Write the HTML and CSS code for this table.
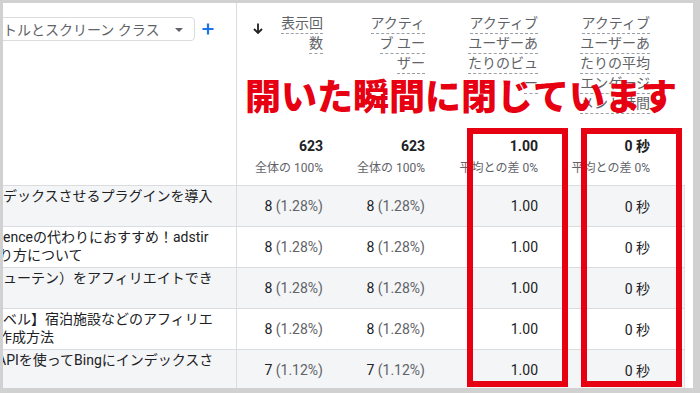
FILE: index.html
```html
<!DOCTYPE html>
<html lang="ja">
<head>
<meta charset="utf-8">
<title>GA table</title>
<link rel="stylesheet" href="styles.css">
</head>
<body>
<div class="frame">
  <div class="table">
    <div class="hcell first">
      <div class="picker">
        <div class="select"><span class="select-text">トルとスクリーン クラス</span><span class="caret"></span></div>
        <svg class="plus" width="12" height="12" viewBox="0 0 12 12"><path d="M6 0.5V11.5M0.5 6H11.5" stroke="#1a73e8" stroke-width="2.2" fill="none"/></svg>
      </div>
    </div>
    <div class="hcell num">
      <div class="label sorted">
        <svg class="arrow" width="10" height="11" viewBox="0 0 10 11"><path d="M5 0.5V10M1 6L5 10L9 6" stroke="#202124" stroke-width="1.8" fill="none"/></svg>
        <div class="lines"><span>表示回</span><span>数</span></div>
      </div>
      <div class="total"><div class="tv">623</div><div class="ts">全体の 100%</div></div>
    </div>
    <div class="hcell num">
      <div class="label"><div class="lines"><span>アクティ</span><span>ブ ユー</span><span>ザー</span></div></div>
      <div class="total"><div class="tv">623</div><div class="ts">全体の 100%</div></div>
    </div>
    <div class="hcell num">
      <div class="label"><div class="lines"><span>アクティブ</span><span>ユーザーあ</span><span>たりのビュ</span><span>ー</span></div></div>
      <div class="total"><div class="tv">1.00</div><div class="ts">平均との差 0%</div></div>
    </div>
    <div class="hcell num">
      <div class="label"><div class="lines"><span>アクティブ</span><span>ユーザーあ</span><span>たりの平均</span><span>エンゲージ</span><span>メント時間</span></div></div>
      <div class="total"><div class="tv">0 秒</div><div class="ts">平均との差 0%</div></div>
    </div>
    <div class="hcell tail"></div>

    <div class="row alt">
      <div class="cell title"><div class="tl">デックスさせるプラグインを導入</div></div>
      <div class="cell val">8<span class="pct">&nbsp;(1.28%)</span></div>
      <div class="cell val">8<span class="pct">&nbsp;(1.28%)</span></div>
      <div class="cell val">1.00</div>
      <div class="cell val">0 秒</div>
      <div class="cell tail"></div>
    </div>
    <div class="row">
      <div class="cell title"><div class="tl">enceの代わりにおすすめ！adstir</div><div class="tl cut4">り方について</div></div>
      <div class="cell val">8<span class="pct">&nbsp;(1.28%)</span></div>
      <div class="cell val">8<span class="pct">&nbsp;(1.28%)</span></div>
      <div class="cell val">1.00</div>
      <div class="cell val">0 秒</div>
      <div class="cell tail"></div>
    </div>
    <div class="row alt">
      <div class="cell title"><div class="tl">ューテン）をアフィリエイトでき</div></div>
      <div class="cell val">8<span class="pct">&nbsp;(1.28%)</span></div>
      <div class="cell val">8<span class="pct">&nbsp;(1.28%)</span></div>
      <div class="cell val">1.00</div>
      <div class="cell val">0 秒</div>
      <div class="cell tail"></div>
    </div>
    <div class="row">
      <div class="cell title"><div class="tl">ベル】宿泊施設などのアフィリエ</div><div class="tl cut5">作成方法</div></div>
      <div class="cell val">8<span class="pct">&nbsp;(1.28%)</span></div>
      <div class="cell val">8<span class="pct">&nbsp;(1.28%)</span></div>
      <div class="cell val">1.00</div>
      <div class="cell val">0 秒</div>
      <div class="cell tail"></div>
    </div>
    <div class="row alt">
      <div class="cell title"><div class="tl cut6">APIを使ってBingにインデックスさ</div></div>
      <div class="cell val">7<span class="pct">&nbsp;(1.12%)</span></div>
      <div class="cell val">7<span class="pct">&nbsp;(1.12%)</span></div>
      <div class="cell val">1.00</div>
      <div class="cell val">0 秒</div>
      <div class="cell tail"></div>
    </div>
  </div>

  <div class="headline">開いた瞬間に閉じています</div>
  <div class="mark mark-a"></div>
  <div class="mark mark-b"></div>
</div>
</body>
</html>
```

FILE: styles.css
```css
html, body {
  margin: 0;
  padding: 0;
}
body {
  background: #d1d1d1;
  font-family: Roboto, "Noto Sans CJK JP", sans-serif;
  color: #202124;
  width: 700px;
  height: 393px;
  overflow: hidden;
}
.frame {
  position: relative;
  margin: 3px 0 0 3px;
  width: 690px;
  height: 385px;
  background: #fff;
  overflow: hidden;
}
.table {
  display: grid;
  grid-template-columns: 234px 98px 102px 113px 112px 31px;
  grid-template-rows: 182px repeat(5, 41px);
}
.row {
  display: contents;
}
.row.alt > .cell {
  background: #f4f5f7;
}
.hcell {
  box-sizing: border-box;
  height: 182px;
}
.hcell.first {
  border-right: 1px solid #dadce0;
  padding-top: 14px;
}
.picker {
  display: flex;
  align-items: center;
  gap: 7px;
}
.select {
  box-sizing: border-box;
  margin-left: -20px;
  width: 212px;
  height: 24px;
  border: 1px solid #dadce0;
  border-radius: 4px;
  padding: 0 11px 0 19px;
  display: flex;
  align-items: center;
  justify-content: space-between;
  font-size: 14px;
  color: #5f6368;
  white-space: nowrap;
}
.caret {
  width: 0;
  height: 0;
  border-left: 4px solid transparent;
  border-right: 4px solid transparent;
  border-top: 4px solid #5f6368;
  margin-top: 1px;
}
.plus {
  display: block;
  margin-top: -1px;
}
.hcell.num {
  display: flex;
  flex-direction: column;
  justify-content: space-between;
  align-items: stretch;
  padding: 11px 12px 7px 0;
}
.label {
  display: flex;
  justify-content: flex-end;
}
.label.sorted {
  justify-content: space-between;
  padding-left: 16px;
}
.arrow {
  display: block;
  margin-top: 9px;
}
.lines {
  display: flex;
  flex-direction: column;
  align-items: flex-end;
}
.lines span {
  box-sizing: border-box;
  height: 20px;
  line-height: 19px;
  font-size: 14px;
  color: #5f6368;
  border-bottom: 1px dashed #9aa0a6;
  white-space: nowrap;
}
.total {
  text-align: right;
}
.tv {
  font-size: 14px;
  font-weight: 700;
  line-height: 20px;
  margin-bottom: 2px;
  color: #202124;
}
.ts {
  font-size: 12px;
  line-height: 20px;
  color: #5f6368;
  white-space: nowrap;
}
.cell {
  box-sizing: border-box;
  border-top: 1px solid #dadce0;
  height: 41px;
}
.cell.title {
  border-right: 1px solid #dadce0;
  padding-top: 1px;
  font-size: 14px;
  line-height: 18px;
  color: #202124;
  white-space: nowrap;
  overflow: hidden;
}
.tl.cut4 {
  margin-left: -4px;
}
.tl.cut5 {
  margin-left: -5px;
}
.tl.cut6 {
  margin-left: -6px;
}
.cell.val {
  display: flex;
  align-items: center;
  justify-content: flex-end;
  padding-right: 12px;
  font-size: 14px;
  color: #202124;
  white-space: nowrap;
}
.pct {
  color: #5f6368;
}
.cell.tail {
  border-right: 1px solid #e3e3e3;
  width: 23px;
}
.headline {
  position: absolute;
  left: 242px;
  top: 73px;
  font-family: "Noto Sans CJK JP", sans-serif;
  font-size: 36px;
  line-height: 36px;
  font-weight: 900;
  color: #e60012;
  white-space: nowrap;
}
.mark {
  position: absolute;
  top: 125px;
  width: 101px;
  height: 259px;
  box-sizing: border-box;
  border: 6px solid #e60012;
}
.mark-a {
  left: 464px;
}
.mark-b {
  left: 578px;
}
```
